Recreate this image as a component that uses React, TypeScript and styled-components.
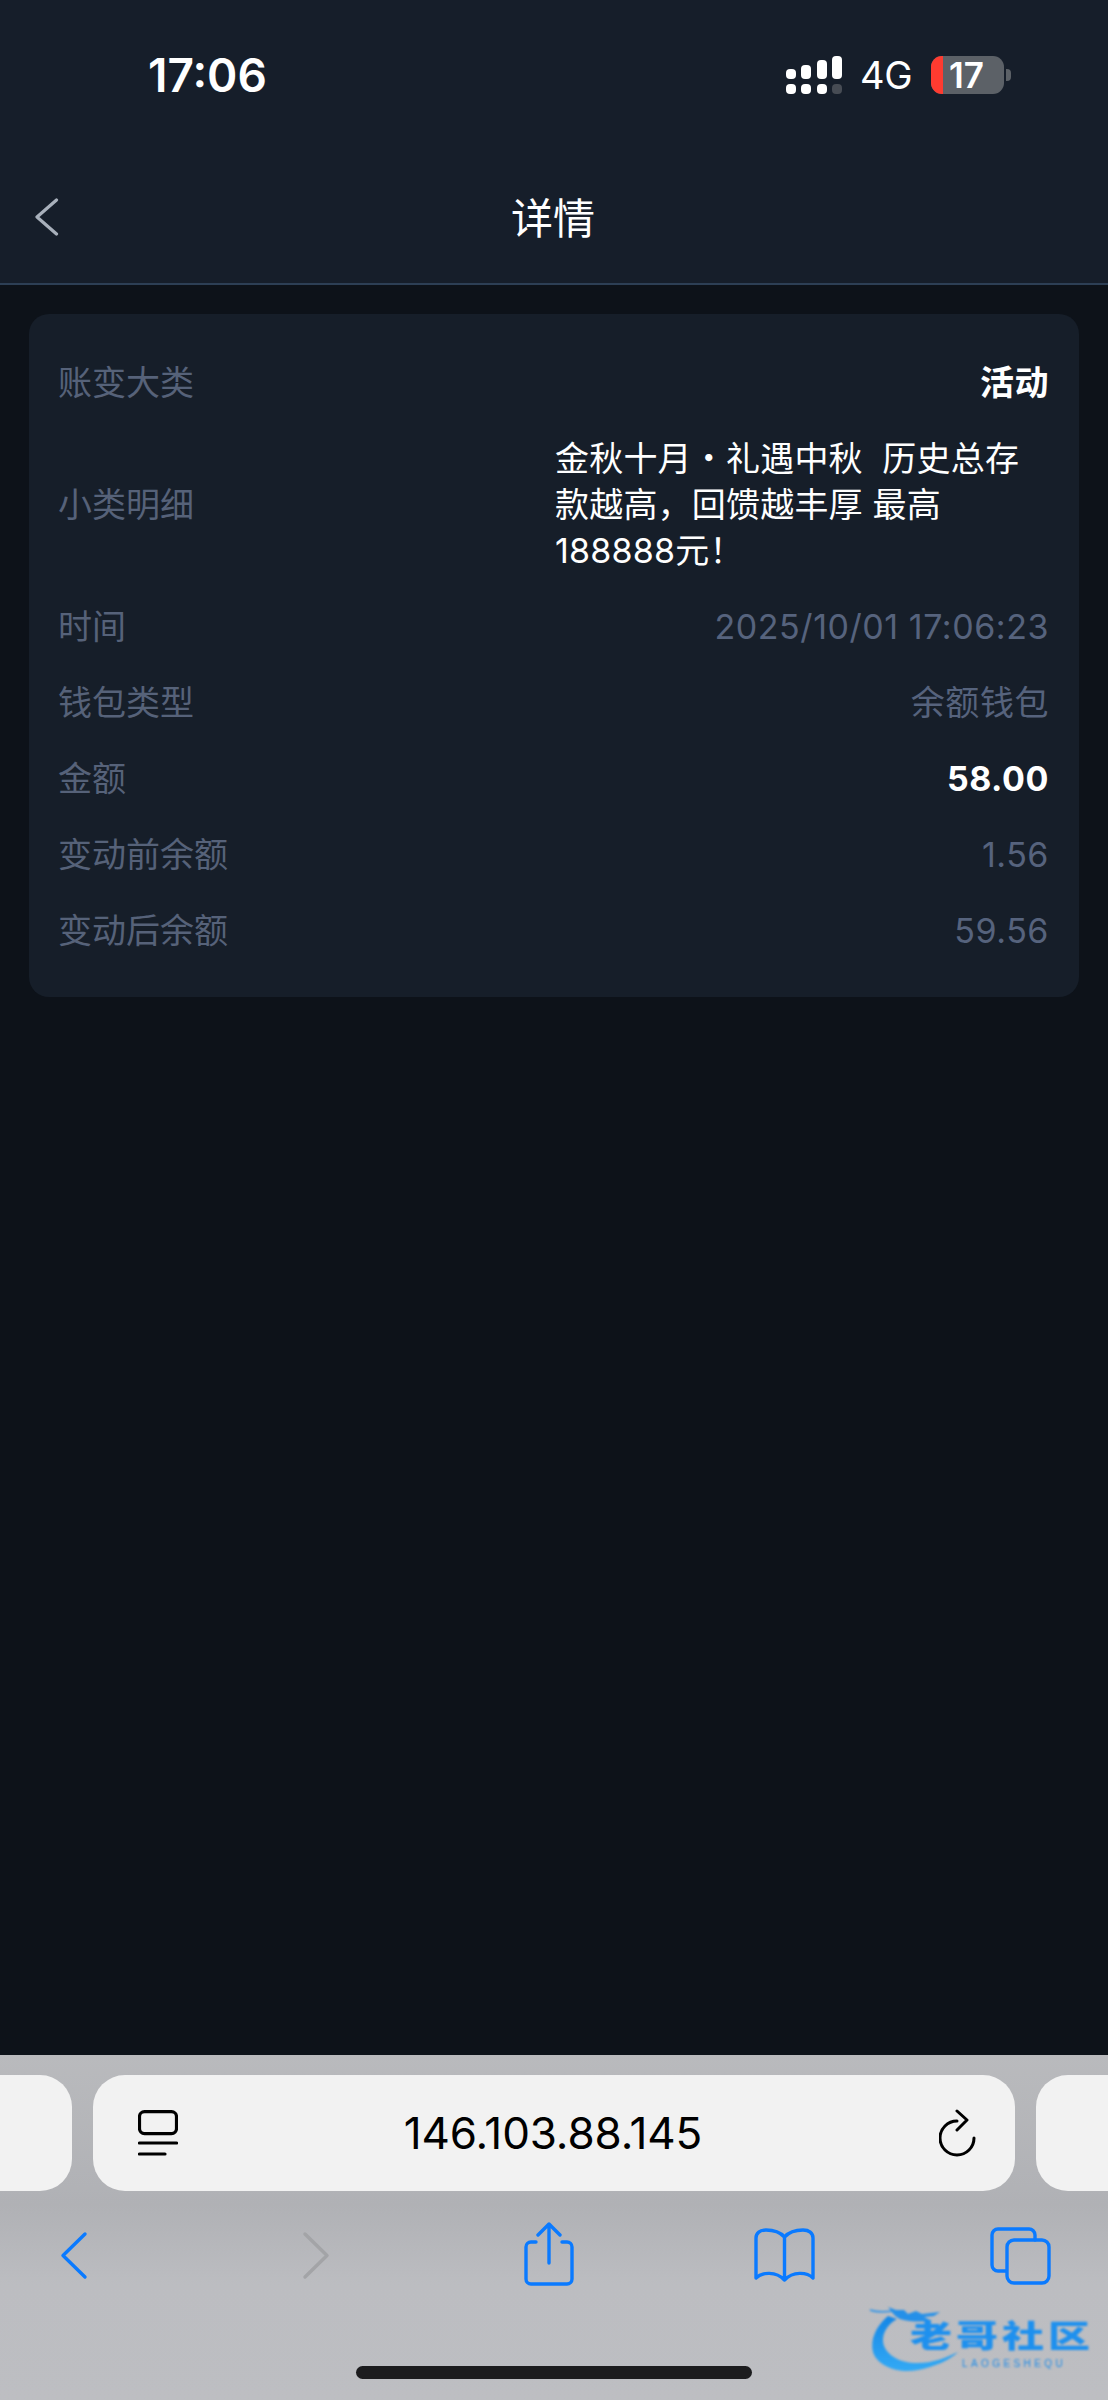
import React from 'react';
import styled, { createGlobalStyle } from 'styled-components';

const CJK = `Inter, "Noto Sans CJK SC", sans-serif`;
const BLUE = '#0a7aff';

const GlobalStyle = createGlobalStyle`
  html, body {
    margin: 0;
    padding: 0;
    background: #0d1219;
  }
  * {
    box-sizing: border-box;
  }
`;

const Page = styled.div`
  width: 1108px;
  height: 2400px;
  display: flex;
  flex-direction: column;
  font-family: ${CJK};
  overflow: hidden;
`;

const Header = styled.header`
  flex-shrink: 0;
  background: #161e2a;
  border-bottom: 2px solid #2d3f55;
`;

const StatusBar = styled.div`
  height: 150px;
  display: flex;
  justify-content: space-between;
  align-items: center;
  padding: 0 97px 0 148px;
  color: #fff;
`;

const Clock = styled.span`
  font-size: 46px;
  font-weight: 600;
`;

const StatusIcons = styled.div`
  display: flex;
  align-items: center;
`;

const NetworkLabel = styled.span`
  font-size: 38px;
  font-weight: 400;
  margin: 0 19px 0 18px;
  letter-spacing: -0.5px;
`;

const Battery = styled.div`
  position: relative;
  width: 73px;
  height: 38px;
  border-radius: 11px;
  background: #5c6167;
  padding-left: 18px;
  font-size: 35px;
  font-weight: 600;
  line-height: 38px;

  &::before {
    content: '';
    position: absolute;
    left: 0;
    top: 0;
    bottom: 0;
    width: 12px;
    border-radius: 11px 0 0 11px;
    background: #ff3b30;
  }
`;

const BatteryNub = styled.div`
  width: 5px;
  height: 12px;
  margin-left: 2px;
  border-radius: 0 4px 4px 0;
  background: #5c6167;
`;

const NavBar = styled.div`
  height: 133px;
  display: grid;
  grid-template-columns: 1fr auto 1fr;
  align-items: center;
  padding: 0 35px;
`;

const NavTitle = styled.h1`
  margin: 0 0 0 -2px;
  padding-bottom: 2px;
  font-size: 42px;
  font-weight: 400;
  color: #fff;
`;

const Main = styled.main`
  flex: 1;
  padding: 29px 29px 0 29px;
  background: #0d1219;
`;

const Card = styled.section`
  display: flex;
  flex-direction: column;
  gap: 30px;
  padding: 46px 30px 43px 29px;
  background: #161e29;
  border-radius: 20px;
`;

const Row = styled.div`
  display: flex;
  justify-content: space-between;
  align-items: center;
  font-size: 34px;
  line-height: 46px;
`;

const Label = styled.span`
  color: #566279;
`;

const Value = styled.span<{ $tone?: 'muted' | 'strong' | 'plain' }>`
  color: ${p => (p.$tone === 'muted' ? '#56637d' : '#fff')};
  font-weight: ${p => (p.$tone === 'strong' ? 700 : 400)};
  letter-spacing: 0.55px;
`;

const LongValue = styled(Value)`
  width: 494px;
  text-align: left;
  white-space: pre-wrap;
  letter-spacing: 0.2px;
`;

const Chrome = styled.footer`
  position: relative;
  flex-shrink: 0;
  height: 345px;
  background: linear-gradient(#b9babd 0, #b0b1b5 150px, #bcbdc1 230px, #bdbec2 100%);
`;

const TabStrip = styled.div`
  display: grid;
  grid-template-columns: 72px 1fr 72px;
  gap: 21px;
  padding-top: 20px;
  height: 136px;
`;

const SideTab = styled.div<{ $side: 'left' | 'right' }>`
  background: #f2f2f2;
  border-radius: ${p => (p.$side === 'left' ? '0 32px 32px 0' : '32px 0 0 32px')};
`;

const UrlBar = styled.div`
  display: flex;
  align-items: center;
  justify-content: space-between;
  padding: 0 38px 0 45px;
  background: #f2f2f2;
  border-radius: 32px;
  color: #000;
`;

const UrlText = styled.span`
  margin-right: 11px;
  font-size: 44px;
  font-weight: 400;
  letter-spacing: -0.1px;
`;

const Toolbar = styled.nav`
  display: grid;
  grid-template-columns: 242px 233px 235px 236px 62px;
  padding: 31px 0 0 44px;
`;

const ToolIcon = styled.svg.attrs({ fill: 'none', strokeLinecap: 'round', strokeLinejoin: 'round' })<{ $muted?: boolean }>`
  display: block;
  width: 62px;
  height: 64px;
  stroke: ${p => (p.$muted ? '#a3a4a7' : BLUE)};
  stroke-width: 3.4;
`;

const HomeBar = styled.div`
  position: absolute;
  left: 356px;
  bottom: 21px;
  width: 396px;
  height: 13px;
  border-radius: 7px;
  background: #1c1c1e;
`;

const Watermark = styled.div`
  position: absolute;
  right: 0;
  bottom: 0;
  width: 258px;
  height: 110px;
  filter: blur(0.8px);
`;

const WatermarkDragon = styled.svg`
  position: absolute;
  inset: 0;
  width: 258px;
  height: 110px;
`;

const WatermarkName = styled.span`
  position: absolute;
  left: 60px;
  top: 28px;
  width: 182px;
  font-family: "Noto Sans CJK SC", sans-serif;
  font-size: 42px;
  font-weight: 900;
  line-height: 42px;
  letter-spacing: 4px;
  white-space: nowrap;
  color: #1e90ee;
  transform: scale(1, 0.74);
  transform-origin: left top;
`;

const WatermarkLatin = styled.span`
  position: absolute;
  left: 112px;
  top: 69px;
  font-family: "Liberation Sans", sans-serif;
  font-size: 10px;
  line-height: 10px;
  letter-spacing: 3.4px;
  color: #1e8ce8;
  white-space: nowrap;
`;

const SignalIcon = () => (
  <svg width="56" height="38" viewBox="0 0 56 38">
    <g fill="#fff">
      <rect x="0" y="13" width="10" height="10" rx="4" />
      <rect x="15" y="9" width="10" height="14" rx="4" />
      <rect x="31" y="4" width="10" height="19" rx="4" />
      <rect x="46" y="0" width="10" height="23" rx="4" />
      <rect x="0" y="28" width="10" height="10" rx="4" />
      <rect x="15" y="28" width="10" height="10" rx="4" />
      <rect x="31" y="28" width="10" height="10" rx="4" />
    </g>
    <rect x="46" y="28" width="10" height="10" rx="4" fill="#474c54" />
  </svg>
);

const BackChevron = () => (
  <svg width="24" height="38" viewBox="0 0 24 38" fill="none" stroke="#a8b0bb" strokeWidth="3.2" strokeLinecap="round" strokeLinejoin="round">
    <path d="M21.5 2 L2 19 L21.5 36" />
  </svg>
);

const TabsIcon = () => (
  <svg width="40" height="46" viewBox="0 0 40 46" fill="none" stroke="#000" strokeWidth="3.2" strokeLinecap="round">
    <rect x="1.5" y="1.6" width="37" height="22" rx="5" />
    <path d="M1.5 33 H38.5 M1.5 44 H27" />
  </svg>
);

const ReloadIcon = () => (
  <svg width="38" height="48" viewBox="0 0 38 48" fill="none" stroke="#000" strokeWidth="3" strokeLinecap="round" strokeLinejoin="round">
    <path d="M18 12 A17 17 0 1 0 35 29" />
    <path d="M18 2 L28 11 L18 21" />
  </svg>
);

const details: { label: string; value: string; tone: 'muted' | 'strong' | 'plain' }[] = [
  { label: '时间', value: '2025/10/01 17:06:23', tone: 'muted' },
  { label: '钱包类型', value: '余额钱包', tone: 'muted' },
  { label: '金额', value: '58.00', tone: 'strong' },
  { label: '变动前余额', value: '1.56', tone: 'muted' },
  { label: '变动后余额', value: '59.56', tone: 'muted' },
];

const App = () => {
  return (
    <Page>
      <GlobalStyle />
      <Header>
        <StatusBar>
          <Clock>17:06</Clock>
          <StatusIcons>
            <SignalIcon />
            <NetworkLabel>4G</NetworkLabel>
            <Battery>17</Battery>
            <BatteryNub />
          </StatusIcons>
        </StatusBar>
        <NavBar>
          <BackChevron />
          <NavTitle>详情</NavTitle>
        </NavBar>
      </Header>

      <Main>
        <Card>
          <Row>
            <Label>账变大类</Label>
            <Value $tone="strong">活动</Value>
          </Row>
          <Row>
            <Label>小类明细</Label>
            <LongValue $tone="plain">金秋十月・礼遇中秋  历史总存款越高，回馈越丰厚 最高188888元！</LongValue>
          </Row>
          {details.map(item => (
            <Row key={item.label}>
              <Label>{item.label}</Label>
              <Value $tone={item.tone}>{item.value}</Value>
            </Row>
          ))}
        </Card>
      </Main>

      <Chrome>
        <TabStrip>
          <SideTab $side="left" />
          <UrlBar>
            <TabsIcon />
            <UrlText>146.103.88.145</UrlText>
            <ReloadIcon />
          </UrlBar>
          <SideTab $side="right" />
        </TabStrip>
        <Toolbar>
          <ToolIcon viewBox="0 0 62 64">
            <path d="M41 12 L19 33.5 L41 55" />
          </ToolIcon>
          <ToolIcon viewBox="0 0 62 64" $muted>
            <path d="M19 12 L41 33.5 L19 55" />
          </ToolIcon>
          <ToolIcon viewBox="0 0 62 64">
            <path d="M17 20 H12 a5 5 0 0 0 -5 5 V57 a5 5 0 0 0 5 5 H48 a5 5 0 0 0 5 -5 V25 a5 5 0 0 0 -5 -5 H43" />
            <path d="M30 41 V2 M19 13 L30 2 L41 13" />
          </ToolIcon>
          <ToolIcon viewBox="0 0 62 64">
            <path d="M30.5 15 C26 10 18 8 12 8 C6 8 2 11 2 16 V56 C8 50 22 49 30.5 58 C39 49 53 50 59 56 V16 C59 11 55 8 49 8 C43 8 35 10 30.5 15 Z M30.5 15 V58" />
          </ToolIcon>
          <ToolIcon viewBox="0 0 62 64">
            <path d="M45 18 V13 a6 6 0 0 0 -6 -6 H8 a6 6 0 0 0 -6 6 V43 a6 6 0 0 0 6 6 H16" />
            <rect x="17" y="18" width="42" height="43" rx="7" />
          </ToolIcon>
        </Toolbar>
        <HomeBar />
        <Watermark>
          <WatermarkDragon viewBox="0 0 258 110">
            <defs>
              <linearGradient id="dragonFill" x1="0" y1="0" x2="0" y2="1">
                <stop offset="0" stopColor="#1486e6" />
                <stop offset="1" stopColor="#33aaf5" />
              </linearGradient>
            </defs>
            <path
              d="M38 26 C26 36 20 50 23 62 C27 76 48 84 68 80 C84 77 100 70 108 62 C96 68 80 74 64 73 C46 72 33 62 33 50 C33 42 38 34 47 29 Z"
              fill="url(#dragonFill)"
            />
            <path d="M20 20 C28 23 36 22 44 21" fill="none" stroke="#2a93ea" strokeWidth="1.6" />
            <path
              d="M38 17 L46 20 L54 20 L58 24 L66 21 L72 24 L90 22 L84 26 L74 27 L82 31 C70 32 60 32 50 29 C44 26 42 22 38 17 Z"
              fill="#2590e8"
            />
          </WatermarkDragon>
          <WatermarkName>老哥社区</WatermarkName>
          <WatermarkLatin>LAOGESHEQU</WatermarkLatin>
        </Watermark>
      </Chrome>
    </Page>
  );
};

export default App;
